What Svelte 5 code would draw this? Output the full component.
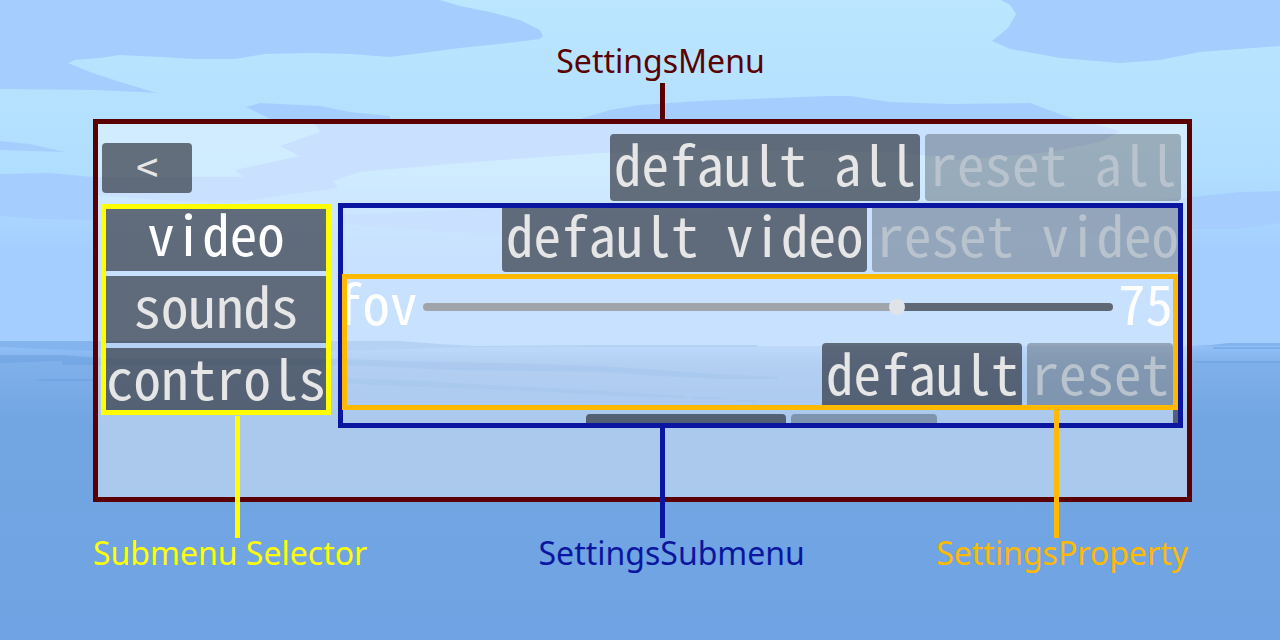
<script>
  let fov = $state(75);
  let selected = $state('video');
  const min = 30;
  const max = 95;
  const submenus = ['video', 'sounds', 'controls'];
  const fill = $derived(((fov - min) / (max - min)) * 100);
</script>

<main class="scene">
  <svg class="backdrop" viewBox="0 0 1280 640" preserveAspectRatio="none" aria-hidden="true">
    <defs>
      <linearGradient id="sky" x1="0" y1="0" x2="0" y2="1">
        <stop offset="0" stop-color="#bce6ff" />
        <stop offset="0.5" stop-color="#b0deff" />
        <stop offset="0.72" stop-color="#a3ceff" />
        <stop offset="1" stop-color="#a3ceff" />
      </linearGradient>
      <linearGradient id="sea" x1="0" y1="0" x2="0" y2="1">
        <stop offset="0" stop-color="#92c0f7" />
        <stop offset="0.06" stop-color="#80b0ea" />
        <stop offset="0.25" stop-color="#72a6e2" />
        <stop offset="1" stop-color="#70a3e3" />
      </linearGradient>
    </defs>
    <rect width="1280" height="350" fill="url(#sky)" />
    <g fill="#a5ceff">
      <path d="M0 0H440L460 6 490 12 520 20 540 30 543 36 540 39 508 43 460 48 430 52 390 57 350 54 310 53 265 54 235 59 193 59 160 57 120 55 100 58 75 60 68 63 90 72 120 82 157 93 140 92 95 90 0 89Z" />
      <path d="M1001 0L1010 5 1016 14 1008 28 992 41 1010 49 1060 58 1120 63 1160 60 1200 52 1240 49 1280 46V0Z" />
      <path d="M246 107L260 103 320 106 350 112 390 116 390 119 580 119 610 110 640 105 700 101 750 99 830 96 850 96 890 102 950 104 1030 103 1065 116 1120 131 1100 142 1050 152 960 160 900 152 700 150 600 153 460 163 360 172 333 181 338 188 300 193 230 203 160 200 93 195 93 177 243 177 235 170 300 156 280 146 320 132 315 124 270 119Z" />
      <path d="M0 141L30 144 65 152 0 150ZM0 174L50 173 93 177V220L40 219 0 216Z" />
      <path d="M1192 197L1240 192 1280 191V223L1240 229H1192L1120 235 1000 232 900 240 700 228 500 236 340 224V215L520 207 700 214 900 200 1100 205Z" />
    </g>
    <rect y="346" width="1280" height="294" fill="url(#sea)" />
    <path d="M0 341H400L440 344 475 346 600 345 757 345V347H480L340 351H90L0 347Z" fill="#84b4ee" />
    <path d="M1280 343H1228L1212 345 1192 346H1280Z" fill="#84b4ee" />
    <g fill="#6aa0df" opacity="0.55">
      <path d="M0 355H60L100 358 340 359 400 361 500 363 600 366 660 370 700 373 778 377V379H720L660 376 600 372 530 371 450 370 370 366 340 365 62 365V361L0 363Z" />
      <path d="M340 378L430 381 450 383 550 388 620 392 685 396V398L620 396 550 392 500 390 370 385 340 382ZM45 379H93V381H33Z" />
      <path d="M692 397H722V399H692ZM737 400H757V402H737ZM1192 361H1280V363H1197ZM1213 347H1280V349H1213Z" />
    </g>
  </svg>

  <div class="figure">
    <div class="callout menu-name">SettingsMenu</div>

    <section class="menu framed" aria-label="Settings">
      <header class="toolbar">
        <button class="btn back">&lt;</button>
        <div class="actions">
          <button class="btn">default all</button>
          <button class="btn" disabled>reset all</button>
        </div>
      </header>

      <div class="columns">
        <nav class="selector framed" aria-label="Submenus">
          {#each submenus as name}
            <button class="btn" class:active={selected === name} onclick={() => (selected = name)}>{name}</button>
          {/each}
        </nav>

        <section class="submenu framed" aria-label="Video settings">
          <div class="actions">
            <button class="btn">default video</button>
            <button class="btn" disabled>reset video</button>
          </div>

          <div class="property framed">
            <div class="value-row">
              <label for="fov">fov</label>
              <input id="fov" type="range" {min} {max} bind:value={fov} style="--fill: {fill}%" />
              <output for="fov">{fov}</output>
            </div>
            <div class="actions">
              <button class="btn" onclick={() => (fov = 75)}>default</button>
              <button class="btn" disabled>reset</button>
            </div>
          </div>

          <div class="next" aria-hidden="true">
            <span class="stub"></span>
            <span class="stub faint"></span>
            <span class="stub edge"></span>
          </div>
        </section>
      </div>
    </section>

    <div class="names">
      <div class="callout selector-name">Submenu Selector</div>
      <div class="callout submenu-name">SettingsSubmenu</div>
      <div class="callout property-name">SettingsProperty</div>
    </div>
  </div>
</main>

<style>
  :global(body) {
    margin: 0;
  }

  .scene {
    --maroon: #5a0000;
    --yellow: #ffff00;
    --navy: #0b16a0;
    --amber: #ffb900;
    position: relative;
    min-height: 100vh;
    overflow: hidden;
    box-sizing: border-box;
    background: #70a3e3;
  }

  .backdrop {
    position: absolute;
    inset: 0;
    width: 100%;
    height: 100%;
  }

  .figure {
    position: relative;
    display: flex;
    flex-direction: column;
    padding: 39px 88px 0 93px;
  }

  .callout {
    position: relative;
    color: var(--tone);
    font-family: 'Noto Sans', sans-serif;
    font-size: 32px;
    line-height: 44px;
    white-space: nowrap;
  }

  .callout::before {
    content: '';
    position: absolute;
    left: 50%;
    width: 5px;
    background: var(--tone);
  }

  .menu-name {
    --tone: var(--maroon);
    align-self: center;
    margin: 0 0 36px 36px;
  }

  .menu-name::before {
    top: 44px;
    height: 36px;
  }

  .framed {
    position: relative;
  }

  .framed::after {
    content: '';
    position: absolute;
    inset: 0;
    border: 5px solid var(--tone);
    pointer-events: none;
  }

  .menu {
    --tone: var(--maroon);
    display: flex;
    flex-direction: column;
    gap: 2px;
    padding: 15px 9px 74px 8px;
    background: rgba(255, 255, 255, 0.4);
  }

  .toolbar {
    display: flex;
    align-items: center;
    justify-content: space-between;
    padding: 0 2px 0 1px;
  }

  .actions {
    display: flex;
    justify-content: flex-end;
    gap: 5px;
  }

  .btn {
    height: 67px;
    box-sizing: border-box;
    margin: 0;
    padding: 0 4px 12px;
    border: 0;
    border-radius: 4px;
    background: rgba(25, 26, 35, 0.6);
    color: #e6e6e6;
    font-family: 'Noto Sans Mono CJK SC', 'Liberation Mono', monospace;
    font-size: 55px;
    line-height: 54px;
    white-space: nowrap;
  }

  .btn:disabled {
    background: rgba(5, 5, 5, 0.27);
    color: #b8c3ce;
  }

  .btn.active {
    color: #ffffff;
  }

  .back {
    width: 90px;
    height: 50px;
    padding: 0 0 6px;
    font-size: 44px;
    line-height: 44px;
  }

  .columns {
    display: flex;
    align-items: flex-start;
    gap: 7px;
  }

  .selector {
    --tone: var(--yellow);
    display: flex;
    flex: 0 0 230px;
    flex-direction: column;
    gap: 5px;
    height: 211px;
    margin-top: 1px;
    overflow: hidden;
  }

  .submenu {
    --tone: var(--navy);
    flex: 1;
    min-width: 0;
    height: 223px;
    padding-top: 2px;
    overflow: hidden;
  }

  .property {
    --tone: var(--amber);
    z-index: 1;
    display: flex;
    flex-direction: column;
    gap: 6px;
    margin: 2px 5px 0 4px;
    padding: 3px 5px 0 0;
    overflow: hidden;
  }

  .value-row {
    display: flex;
    align-items: center;
    gap: 5px;
    height: 60px;
    margin-left: -7px;
    color: #ffffff;
    font-family: 'Noto Sans Mono CJK SC', 'Liberation Mono', monospace;
    font-size: 55px;
    line-height: 48px;
  }

  .value-row label,
  .value-row output {
    padding-bottom: 12px;
  }

  input {
    flex: 1;
    min-width: 0;
    height: 16px;
    margin: 0;
    appearance: none;
    background: transparent;
  }

  input::-webkit-slider-runnable-track {
    height: 8px;
    border-radius: 4px;
    background: linear-gradient(to right, #a0a5ab var(--fill), #5f6975 var(--fill));
  }

  input::-webkit-slider-thumb {
    width: 16px;
    height: 16px;
    margin-top: -4px;
    appearance: none;
    border-radius: 50%;
    background: #e0e4e8;
  }

  .next {
    display: flex;
    align-items: flex-end;
    gap: 5px;
    height: 16px;
    padding: 0 5px 0 248px;
  }

  .stub {
    width: 200px;
    height: 12px;
    border-radius: 4px 4px 0 0;
    background: rgba(25, 26, 35, 0.6);
  }

  .faint {
    width: 146px;
    background: rgba(5, 5, 5, 0.27);
  }

  .edge {
    width: 5px;
    height: 16px;
    margin-left: auto;
    border-radius: 0 0 4px 4px;
  }

  .names {
    display: flex;
    justify-content: space-between;
    padding: 29px 4px 0 0;
  }

  .names .callout::before {
    bottom: 37px;
  }

  .selector-name {
    --tone: var(--yellow);
  }

  .names .selector-name::before {
    left: 142px;
    height: 122px;
  }

  .submenu-name {
    --tone: var(--navy);
    margin-left: 40px;
  }

  .names .submenu-name::before {
    left: 121px;
    height: 112px;
  }

  .property-name {
    --tone: var(--amber);
  }

  .names .property-name::before {
    right: 129px;
    left: auto;
    height: 128px;
  }
</style>
